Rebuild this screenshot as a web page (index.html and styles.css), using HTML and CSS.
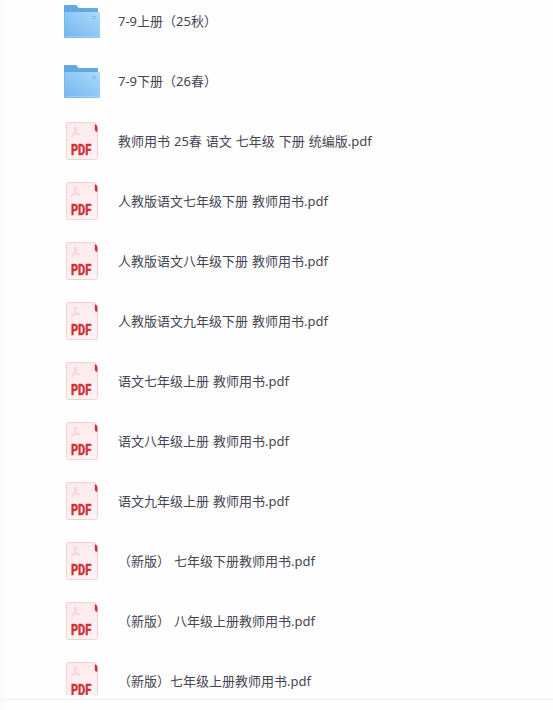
FILE: index.html
```html
<!DOCTYPE html>
<html lang="zh-CN">
<head>
<meta charset="utf-8">
<title>教师用书</title>
<link rel="stylesheet" href="styles.css">
</head>
<body>
<svg width="0" height="0" class="defs" aria-hidden="true">
  <defs>
    <linearGradient id="front" x1="0" y1="1" x2="1" y2="0">
      <stop offset="0" stop-color="#74b5ec"/>
      <stop offset=".5" stop-color="#8fc7f5"/>
      <stop offset="1" stop-color="#acdafa"/>
    </linearGradient>
    <linearGradient id="paper" x1="0" y1="0" x2="0" y2="1">
      <stop offset="0" stop-color="#fdeaec"/>
      <stop offset="1" stop-color="#fff3f3"/>
    </linearGradient>
    <symbol id="folder" viewBox="0 0 36 36">
      <path d="M0 3.2Q0 2 1.2 2H11.5Q12.4 2 13 2.8L14.6 5H33Q34 5 34 6V32H0Z" fill="#62a9e0"/>
      <path d="M1.8 9H34.8Q36 9 36 10.2V33.8Q36 35 34.8 35H1.2Q0 35 0 33.8V30L.6 10.2Q.7 9 1.8 9Z" fill="url(#front)"/>
      <path d="M2 33.5H34.5" stroke="#a3d2f7" stroke-width=".8"/>
      <path d="M28 13.5H32M28 15.5H32" stroke="#75b4e6" stroke-width=".8"/>
    </symbol>
    <symbol id="pdf" viewBox="0 0 36 40">
      <path d="M4 1.5H31L33.5 6V36.5Q33.5 38.5 31.5 38.5H4.5Q2.5 38.5 2.5 36.5V3Q2.5 1.5 4 1.5Z" fill="url(#paper)" stroke="#f6d0d2"/>
      <path d="M30.8 3Q33.4 4 33.4 6.5V11Q30.8 10.8 30.8 8.5Z" fill="#c93238"/>
      <path d="M11.2 6C12.7 6 11.9 9 11 11C10 13.4 8.2 16 7.4 15.3C6.7 14 11.3 12.4 15.2 12.9C16.4 13.5 14.2 14.4 12.6 12.5C11 10.5 9.9 6.5 11.2 6Z" fill="none" stroke="#f3c6cb" stroke-width=".9"/>
      <text class="mark" x="6.9" y="33.6" textLength="20.4" lengthAdjust="spacingAndGlyphs">PDF</text>
    </symbol>
  </defs>
</svg>
<main class="panel">
  <ul class="files">
    <li><svg class="folder"><use href="#folder"/></svg><span>7-9上册（25秋）</span></li>
    <li><svg class="folder"><use href="#folder"/></svg><span>7-9下册（26春）</span></li>
    <li><svg class="pdf"><use href="#pdf"/></svg><span>教师用书 25春 语文 七年级 下册 统编版.pdf</span></li>
    <li><svg class="pdf"><use href="#pdf"/></svg><span>人教版语文七年级下册 教师用书.pdf</span></li>
    <li><svg class="pdf"><use href="#pdf"/></svg><span>人教版语文八年级下册 教师用书.pdf</span></li>
    <li><svg class="pdf"><use href="#pdf"/></svg><span>人教版语文九年级下册 教师用书.pdf</span></li>
    <li><svg class="pdf"><use href="#pdf"/></svg><span>语文七年级上册 教师用书.pdf</span></li>
    <li><svg class="pdf"><use href="#pdf"/></svg><span>语文八年级上册 教师用书.pdf</span></li>
    <li><svg class="pdf"><use href="#pdf"/></svg><span>语文九年级上册 教师用书.pdf</span></li>
    <li><svg class="pdf"><use href="#pdf"/></svg><span>（新版） 七年级下册教师用书.pdf</span></li>
    <li><svg class="pdf"><use href="#pdf"/></svg><span>（新版） 八年级上册教师用书.pdf</span></li>
    <li><svg class="pdf"><use href="#pdf"/></svg><span>（新版）七年级上册教师用书.pdf</span></li>
  </ul>
</main>
</body>
</html>
```
FILE: styles.css
```css
* { box-sizing: border-box; }
body {
  margin: 0;
  height: 710px;
  overflow: hidden;
  background: #f8faff;
  font-family: "Noto Sans", "Noto Sans CJK SC", sans-serif;
}
.defs { display: block; }
.panel {
  height: 710px;
  margin-left: 4px;
  background: #fefefe;
}
.files {
  display: flex;
  flex-direction: column;
  justify-content: flex-end;
  height: 695px;
  margin: 0;
  padding: 0;
  overflow: hidden;
  list-style: none;
}
.files li {
  display: flex;
  flex: none;
  align-items: center;
  gap: 18px;
  height: 60px;
  padding-left: 60px;
  color: #454553;
  font-size: 13px;
  line-height: 20px;
  word-spacing: .6px;
  white-space: nowrap;
}
/* The last row runs past the bottom of the scroll area. */
.files li:last-child { margin-bottom: -16px; }
.folder { width: 36px; height: 36px; }
.pdf { width: 36px; height: 40px; }
.mark {
  fill: #cc3439;
  stroke: #cc3439;
  stroke-width: .3px;
  font-family: Roboto, sans-serif;
  font-size: 14px;
  font-weight: 900;
  word-spacing: 0;
}
.panel::after {
  content: "";
  display: block;
  height: 1px;
  margin-top: 4px;
  background: #eeeff3;
}
```
